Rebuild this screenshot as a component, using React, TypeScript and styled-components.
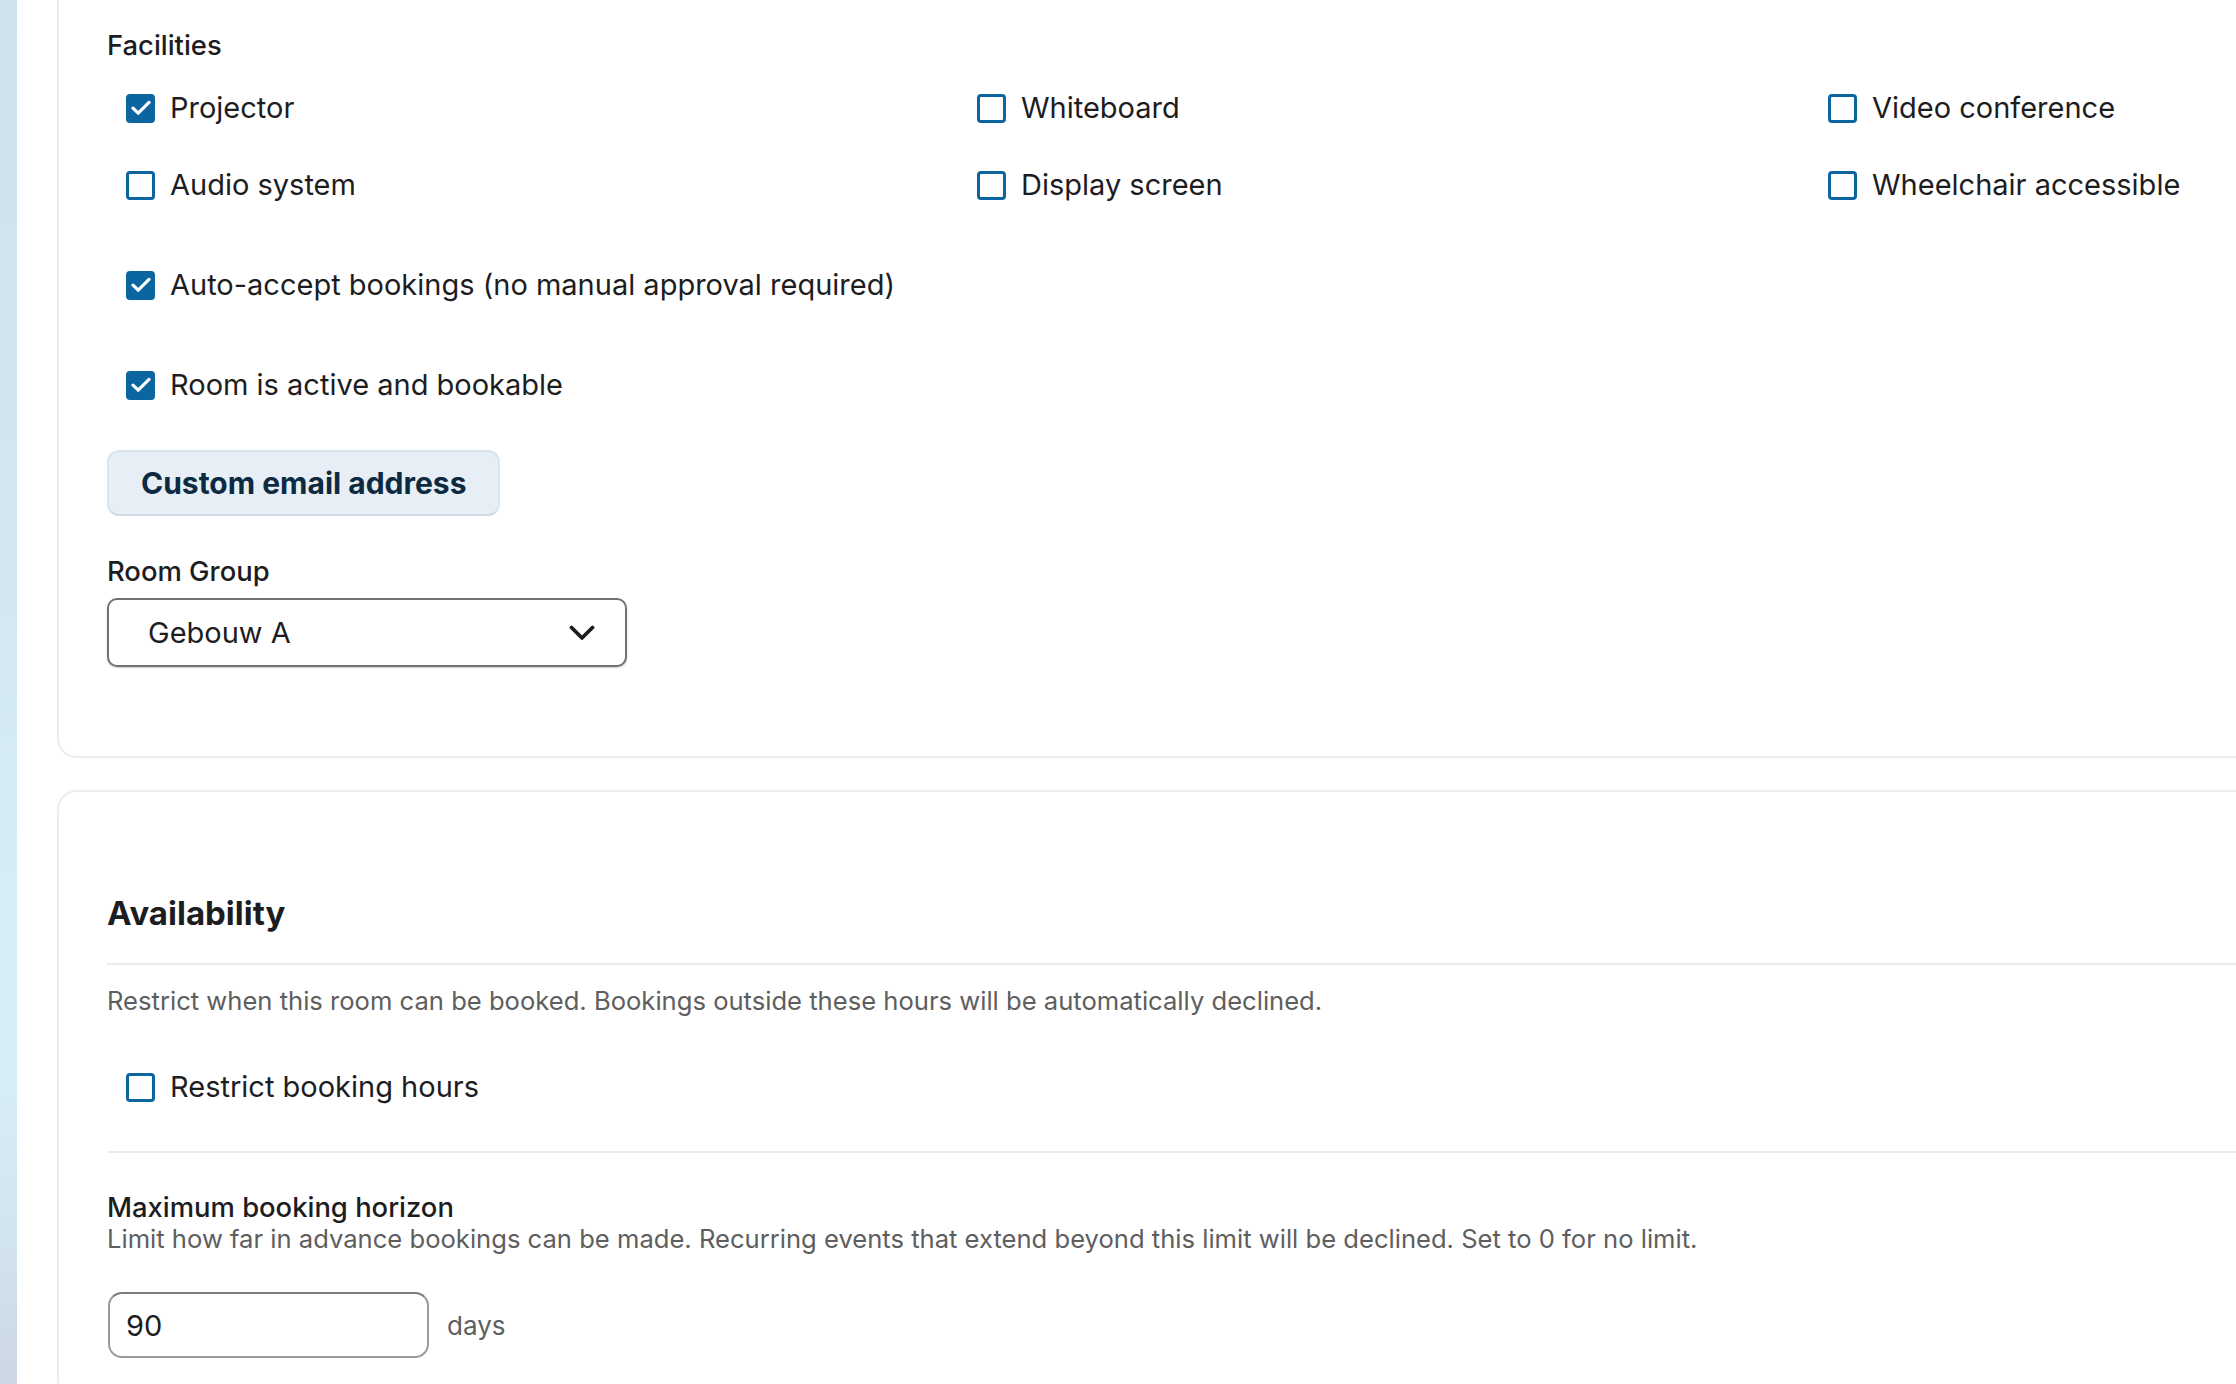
import React from "react";
import styled, { createGlobalStyle } from "styled-components";

const Global = createGlobalStyle`
  html, body { margin: 0; padding: 0; background: #ffffff; overflow: hidden; }
  body { font-family: Inter, "Noto Sans", "Liberation Sans", sans-serif; color: #1d1d1f; }
  * { box-sizing: border-box; }
`;

const Page = styled.div`
  display: flex;
  width: 2236px;
  height: 1384px;
  overflow: hidden;
`;

const Strip = styled.div`
  flex: 0 0 17px;
  background: linear-gradient(180deg, #cee2ee 0%, #d2e7f2 40%, #d8eff9 75%, #d3e6f0 88%, #ccd7e3 100%);
`;

const Main = styled.main`
  flex: 0 0 auto;
  padding-left: 40px;
  display: flex;
  flex-direction: column;
  gap: 32px;
`;

const Card = styled.section<{ $top: number; $bottom: number; $shift?: number }>`
  width: 2700px;
  border: 2px solid #ededed;
  border-radius: 20px;
  margin-top: ${(p) => p.$shift ?? 0}px;
  padding: ${(p) => p.$top}px 48px ${(p) => p.$bottom}px 48px;
  display: flex;
  flex-direction: column;
`;

const FieldLabel = styled.div<{ $lh?: number; $mt?: number }>`
  margin-top: ${(p) => p.$mt ?? 0}px;
  font-size: 27.4px;
  font-weight: 500;
  line-height: ${(p) => p.$lh ?? 36}px;
  color: #1d1d1f;
`;

const FacilityGrid = styled.div`
  margin-top: 27px;
  display: grid;
  grid-template-columns: repeat(3, 851px);
  row-gap: 41px;
`;

const CheckRow = styled.label<{ $mt?: number }>`
  display: flex;
  align-items: center;
  gap: 15px;
  padding-left: 19px;
  height: 36px;
  margin-top: ${(p) => p.$mt ?? 0}px;
  font-size: 29px;
  line-height: 36px;
  color: #1d1d1f;
`;

const Box = styled.span<{ $checked: boolean }>`
  flex: 0 0 29px;
  width: 29px;
  height: 29px;
  border-radius: 4px;
  display: flex;
  align-items: center;
  justify-content: center;
  background: ${(p) => (p.$checked ? "#0b65a1" : "#ffffff")};
  border: 3px solid #0b65a1;
`;

const PillButton = styled.button`
  margin-top: 47px;
  align-self: flex-start;
  height: 66px;
  padding: 0 32px;
  border-radius: 12px;
  background: #e7eef5;
  border: 2px solid #d9e4ed;
  border-bottom-color: #d0dce7;
  font-family: inherit;
  font-size: 30px;
  font-weight: 700;
  color: #0c2a42;
`;

const Select = styled.div`
  margin-top: 9px;
  width: 520px;
  height: 69px;
  border: 2px solid #717171;
  border-radius: 10px;
  box-shadow: 0 1px 2px rgba(0, 0, 0, 0.2);
  display: flex;
  align-items: center;
  justify-content: space-between;
  padding: 0 30px 0 39px;
  font-size: 29px;
  color: #1d1d1f;
`;

const Heading = styled.h2`
  margin: 0;
  font-size: 33px;
  font-weight: 700;
  line-height: 44px;
  color: #1d1d1f;
`;

const Divider = styled.hr<{ $mt: number }>`
  margin: ${(p) => p.$mt}px 0 0 0;
  border: 0;
  height: 2px;
  background: #ececec;
`;

const Desc = styled.p<{ $mt: number; $lh?: number }>`
  margin: ${(p) => p.$mt}px 0 0 0;
  font-size: 25.6px;
  line-height: ${(p) => p.$lh ?? 34}px;
  color: #5e5e5e;
`;

const InputRow = styled.div`
  margin-top: 37px;
  display: flex;
  align-items: center;
  gap: 18px;
`;

const NumberInput = styled.div`
  width: 321px;
  height: 66px;
  margin-left: 1px;
  border: 2px solid #9a9a9a;
  border-top-color: #7c7c7c;
  border-radius: 14px;
  display: flex;
  align-items: center;
  padding-left: 16px;
  font-size: 29px;
  color: #1d1d1f;
`;

const Unit = styled.span`
  font-size: 26px;
  color: #5e5e5e;
`;

const Check = ({ checked, label, mt }: { checked: boolean; label: string; mt?: number }) => (
  <CheckRow $mt={mt}>
    <Box $checked={checked}>
      {checked && (
        <svg width="20" height="16" viewBox="0 0 20 16" fill="none">
          <path d="M2 8.2 L7.2 13.2 L18 2.4" stroke="#fff" strokeWidth="3.2" strokeLinecap="round" strokeLinejoin="round" />
        </svg>
      )}
    </Box>
    <span>{label}</span>
  </CheckRow>
);

const facilities: [string, boolean][] = [
  ["Projector", true],
  ["Whiteboard", false],
  ["Video conference", false],
  ["Audio system", false],
  ["Display screen", false],
  ["Wheelchair accessible", false],
];

export default function App() {
  return (
    <>
      <Global />
      <Page>
        <Strip />
        <Main>
          <Card $shift={-29} $top={54} $bottom={89}>
            <FieldLabel>Facilities</FieldLabel>
            <FacilityGrid>
              {facilities.map(([l, c]) => (
                <Check key={l} label={l} checked={c} />
              ))}
            </FacilityGrid>
            <Check mt={64} checked label="Auto-accept bookings (no manual approval required)" />
            <Check mt={64} checked label="Room is active and bookable" />
            <PillButton>Custom email address</PillButton>
            <FieldLabel $mt={37}>Room Group</FieldLabel>
            <Select>
              <span>Gebouw A</span>
              <svg width="26" height="16" viewBox="0 0 26 16" fill="none">
                <path d="M2.5 2.5 L13 13 L23.5 2.5" stroke="#1d1d1f" strokeWidth="3.8" strokeLinecap="round" strokeLinejoin="round" />
              </svg>
            </Select>
          </Card>
          <Card $top={99} $bottom={40}>
            <Heading>Availability</Heading>
            <Divider $mt={28} />
            <Desc $mt={19}>
              Restrict when this room can be booked. Bookings outside these hours will be automatically declined.
            </Desc>
            <Check mt={51} checked={false} label="Restrict booking hours" />
            <Divider $mt={46} />
            <FieldLabel $lh={32} $mt={38}>Maximum booking horizon</FieldLabel>
            <Desc $mt={0} $lh={32}>
              Limit how far in advance bookings can be made. Recurring events that extend beyond this limit will be declined. Set to 0 for no limit.
            </Desc>
            <InputRow>
              <NumberInput>90</NumberInput>
              <Unit>days</Unit>
            </InputRow>
          </Card>
        </Main>
      </Page>
    </>
  );
}
